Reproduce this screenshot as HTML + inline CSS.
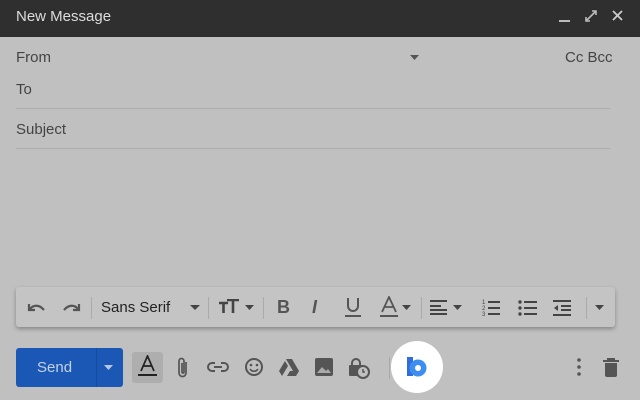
<!DOCTYPE html>
<html><head><style>
*{margin:0;padding:0;box-sizing:border-box}
body{width:640px;height:400px;overflow:hidden;background:#c0c0c0;font-family:"Liberation Sans",sans-serif;position:relative;color:#3c3c3c}
.hd{position:absolute;left:0;top:0;width:640px;height:37px;background:#2f2f2f;color:#dcdcdc;font-size:15px}
.a{position:absolute}
.t{font-size:15px;color:#444}
.ln{position:absolute;left:16px;width:594px;height:1px;background:#adadad}
.tb{position:absolute;left:16px;top:287px;width:599px;height:40px;background:#c4c4c4;border-radius:3px;box-shadow:0 2px 4px rgba(0,0,0,.3)}
.sep{position:absolute;top:10px;width:1px;height:22px;background:#aaa}
</style></head><body>
<div class="hd">
<div class="a" style="left:16px;top:8px">New Message</div>
<div class="a" style="left:559px;top:20px;width:11px;height:2px;background:#bbb"></div>
<svg class="a" style="left:584px;top:9px" width="14" height="14"><path d="M2 12l10-10M8 2h4v4M2 8v4h4" stroke="#bbb" stroke-width="1.6" fill="none"/></svg>
<svg class="a" style="left:611px;top:9px" width="13" height="13"><path d="M2 2l9 9M11 2l-9 9" stroke="#ccc" stroke-width="1.8"/></svg>
</div>
<div class="a t" style="left:16px;top:49px">From</div>
<svg class="a" style="left:410px;top:55px" width="9" height="6"><path d="M0 0h9L4.5 5z" fill="#555"/></svg>
<div class="a t" style="left:565px;top:49px">Cc Bcc</div>
<div class="a t" style="left:16px;top:81px">To</div>
<div class="ln" style="top:108px"></div>
<div class="a t" style="left:16px;top:121px">Subject</div>
<div class="ln" style="top:148px"></div>

<div class="tb">
<svg class="a" style="left:10px;top:13px" width="22" height="14"><path d="M3 4v6h6M4 9c3-4 9-5 14 1" stroke="#555" stroke-width="2.2" fill="none"/></svg>
<svg class="a" style="left:44px;top:13px" width="22" height="14"><path d="M19 4v6h-6M18 9c-3-4-9-5-14 1" stroke="#555" stroke-width="2.2" fill="none"/></svg>
<div class="sep" style="left:75px"></div>
<div class="a" style="left:85px;top:12px;font-size:15px;color:#222">Sans Serif</div>
<svg class="a" style="left:174px;top:18px" width="10" height="6"><path d="M0 0h10L5 5z" fill="#444"/></svg>
<div class="sep" style="left:192px"></div>
<svg class="a" style="left:203px;top:12px" width="22" height="16"><path d="M0 4h9M4.5 4v10M8 1h12M14 1v13" stroke="#444" stroke-width="2.6" fill="none"/></svg>
<svg class="a" style="left:229px;top:18px" width="9" height="6"><path d="M0 0h9L4.5 5z" fill="#444"/></svg>
<div class="sep" style="left:247px"></div>
<div class="a" style="left:261px;top:10px;font-size:18px;font-weight:bold;color:#555">B</div>
<div class="a" style="left:296px;top:10px;font-size:18px;font-weight:bold;font-style:italic;color:#555">I</div>
<svg class="a" style="left:328px;top:9px" width="18" height="22"><path d="M4 2v8a5 5 0 0 0 10 0V2" stroke="#555" stroke-width="2" fill="none"/><path d="M1 20h16" stroke="#555" stroke-width="2"/></svg>
<svg class="a" style="left:363px;top:9px" width="20" height="22"><path d="M3 16L10 1l7 15M5.5 11h9" stroke="#555" stroke-width="1.8" fill="none"/><path d="M1 20h18" stroke="#555" stroke-width="2"/></svg>
<svg class="a" style="left:386px;top:18px" width="9" height="6"><path d="M0 0h9L4.5 5z" fill="#444"/></svg>
<div class="sep" style="left:405px"></div>
<svg class="a" style="left:414px;top:12px" width="20" height="17"><path d="M0 2h17M0 7h11M0 11h17M0 15h17" stroke="#444" stroke-width="2"/></svg>
<svg class="a" style="left:437px;top:18px" width="9" height="6"><path d="M0 0h9L4.5 5z" fill="#444"/></svg>
<svg class="a" style="left:466px;top:11px" width="20" height="20"><path d="M6 4h12M6 10h12M6 16h12" stroke="#444" stroke-width="2"/><text x="0" y="6" font-size="6" fill="#444">1</text><text x="0" y="12" font-size="6" fill="#444">2</text><text x="0" y="18" font-size="6" fill="#444">3</text></svg>
<svg class="a" style="left:502px;top:11px" width="20" height="20"><circle cx="2" cy="4" r="1.7" fill="#444"/><circle cx="2" cy="10" r="1.7" fill="#444"/><circle cx="2" cy="16" r="1.7" fill="#444"/><path d="M6 4h13M6 10h13M6 16h13" stroke="#444" stroke-width="2"/></svg>
<svg class="a" style="left:537px;top:11px" width="20" height="20"><path d="M0 3h18M8 8h10M8 12h10M0 17h18" stroke="#444" stroke-width="2"/><path d="M5 7v6L1 10z" fill="#444"/></svg>
<div class="sep" style="left:570px"></div>
<svg class="a" style="left:579px;top:18px" width="9" height="6"><path d="M0 0h9L4.5 5z" fill="#444"/></svg>
</div>

<div class="a" style="left:16px;top:348px;width:107px;height:39px;background:#1b58b6;border-radius:3px"></div>
<div class="a" style="left:96px;top:348px;width:1px;height:39px;background:#164a9a"></div>
<div class="a" style="left:37px;top:359px;font-size:15px;color:#c4d0e6">Send</div>
<svg class="a" style="left:104px;top:365px" width="9" height="5"><path d="M0 0h9L4.5 5z" fill="#b8c8e4"/></svg>
<div class="a" style="left:132px;top:352px;width:31px;height:31px;background:#aeaeae;border-radius:3px"></div>
<svg class="a" style="left:137px;top:355px" width="21" height="22"><path d="M4 16L10.5 1 17 16M6.5 11h8" stroke="#222" stroke-width="1.7" fill="none"/><path d="M1 20h19" stroke="#222" stroke-width="2"/></svg>
<svg class="a" style="left:176px;top:356px" width="14" height="24"><path d="M10 6v11a3.5 3.5 0 0 1-7 0V5a2.5 2.5 0 0 1 5 0v11a1 1 0 0 1-2 0V7" stroke="#555" stroke-width="1.7" fill="none"/></svg>
<svg class="a" style="left:207px;top:361px" width="22" height="12"><path d="M8 2H5a4 4 0 0 0 0 8h3M14 2h3a4 4 0 0 1 0 8h-3M7 6h8" stroke="#555" stroke-width="2" fill="none"/></svg>
<svg class="a" style="left:244px;top:357px" width="20" height="20"><circle cx="10" cy="10" r="8" stroke="#555" stroke-width="2" fill="none"/><circle cx="7" cy="8" r="1.3" fill="#555"/><circle cx="13" cy="8" r="1.3" fill="#555"/><path d="M6 12c2 3 6 3 8 0" stroke="#555" stroke-width="1.6" fill="none"/></svg>
<svg class="a" style="left:279px;top:359px" width="20" height="17"><path d="M7 0h6l7 12h-6zM6 2l3 5-6 10-3-5zM8 17l3-5h9l-3 5z" fill="#555"/></svg>
<svg class="a" style="left:315px;top:358px" width="18" height="18"><rect width="18" height="18" rx="2" fill="#555"/><path d="M2 15l5-6 4 4 2-2 3 4z" fill="#aaa"/></svg>
<svg class="a" style="left:348px;top:357px" width="22" height="22"><path d="M4 8V6a4 4 0 0 1 8 0v2" stroke="#555" stroke-width="2" fill="none"/><rect x="1" y="8" width="14" height="11" rx="1" fill="#555"/><circle cx="15" cy="15" r="6" fill="#c0c0c0" stroke="#555" stroke-width="2"/><path d="M15 12v3h2" stroke="#555" stroke-width="1.5" fill="none"/></svg>
<div class="a" style="left:389px;top:357px;width:1px;height:22px;background:#aaa"></div>
<div class="a" style="left:391px;top:341px;width:52px;height:52px;border-radius:50%;background:#fff"></div>
<svg class="a" style="left:407px;top:357px" width="20" height="22"><rect x="0" y="0" width="6" height="19" fill="#2f6fdc"/><circle cx="11" cy="11" r="8.5" fill="#3d8ef0"/><circle cx="11" cy="11" r="3" fill="#fff"/></svg>
<svg class="a" style="left:576px;top:358px" width="6" height="18"><circle cx="3" cy="2" r="1.8" fill="#555"/><circle cx="3" cy="9" r="1.8" fill="#555"/><circle cx="3" cy="16" r="1.8" fill="#555"/></svg>
<svg class="a" style="left:603px;top:358px" width="16" height="19"><path d="M0 3h16M5 3V1h6v2" stroke="#555" stroke-width="2" fill="none"/><path d="M2 5h12v12a2 2 0 0 1-2 2H4a2 2 0 0 1-2-2z" fill="#555"/></svg>
</body></html>
